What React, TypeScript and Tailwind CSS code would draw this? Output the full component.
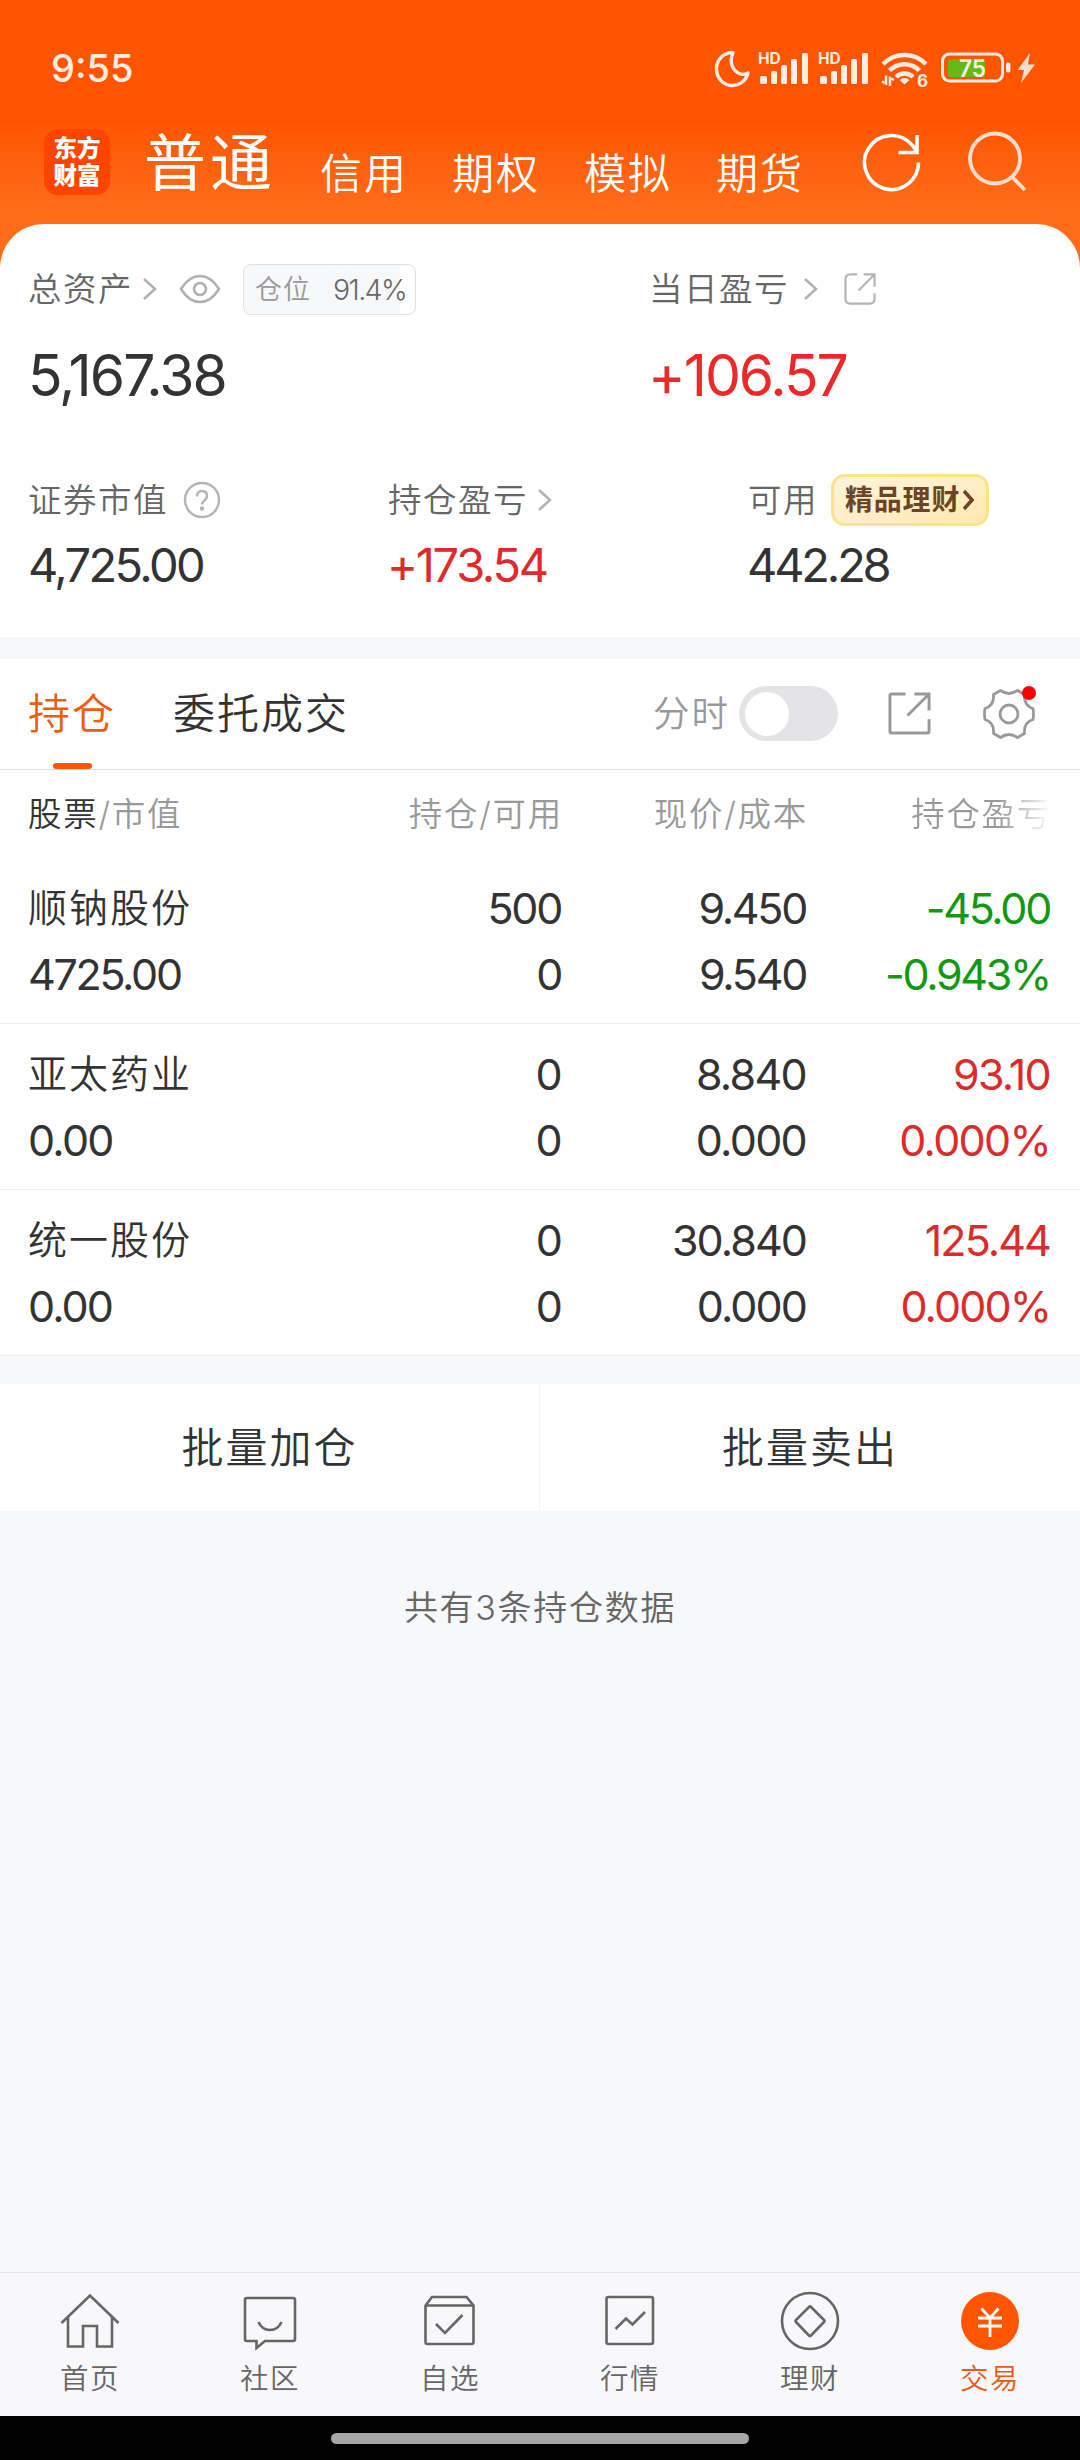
import type { ReactNode } from "react";

const navTabs = ["信用", "期权", "模拟", "期货"];

const holdings = [
  { name: "顺钠股份", value: "4725.00", qty: "500", avail: "0", price: "9.450", cost: "9.540", pl: "-45.00", pct: "-0.943%", color: "text-[#119911]", spacing: "tracking-[-2.3px]" },
  { name: "亚太药业", value: "0.00", qty: "0", avail: "0", price: "8.840", cost: "0.000", pl: "93.10", pct: "0.000%", color: "text-[#dd2b2b]", spacing: "tracking-[-1.7px]" },
  { name: "统一股份", value: "0.00", qty: "0", avail: "0", price: "30.840", cost: "0.000", pl: "125.44", pct: "0.000%", color: "text-[#dd2b2b]", spacing: "tracking-[-1.9px]" },
];

function Chevron({ className = "" }: { className?: string }) {
  return (
    <svg className={`h-6 w-4 shrink-0 ${className}`} viewBox="0 0 16 24" fill="none" stroke="#b0b0b0" strokeWidth="2.5">
      <path d="M2 2l11 10L2 22" />
    </svg>
  );
}

function Signal() {
  return (
    <svg className="-mt-1.5 h-[42px] w-[52px]" viewBox="0 -6 52 42" fill="#ffece2">
      <text x="0" y="13.500" fontSize="15.5" fontWeight="700" fontFamily="Inter, sans-serif">HD</text>
      <rect x="2" y="26" width="7" height="8" rx="1.5" />
      <rect x="13" y="21" width="6" height="13" rx="1.5" />
      <rect x="23" y="15" width="6" height="19" rx="1.5" />
      <rect x="33" y="9" width="6" height="25" rx="1.5" />
      <rect x="44" y="3" width="6" height="31" rx="1.5" />
    </svg>
  );
}

function StatusBar() {
  return (
    <div className="flex h-[120px] items-start pl-[51px] pr-[43px] pt-[50px] text-[#ffece2]">
      <span className="text-[38px] leading-9 font-medium">9:55</span>
      <div className="ml-auto flex items-start gap-2">
        <svg className="h-[38px] w-[36px]" viewBox="0 0 36 38" fill="none" stroke="#ffece2" strokeWidth="3.400" strokeLinejoin="round">
          <path d="M19 2.500A16 16.500 0 1 0 34 23C25 28 13 18 19 2.500Z" />
        </svg>
        <Signal />
        <Signal />
      </div>
      <div className="ml-[10px] flex items-start">
        <svg className="h-[46px] w-[52px]" viewBox="0 0 52 46" fill="none" stroke="#ffece2" strokeWidth="4.500">
          <path d="M3 14a30 30 0 0 1 43 0" />
          <path d="M9.500 20.500a21 21 0 0 1 30 0" />
          <path d="M16 27a12 12 0 0 1 17 0" />
          <path d="M19.500 30q5-4 10 0l-5 4.500z" fill="#ffece2" stroke="none" />
          <path d="M2 31.500l4 2v-8M10 36v-8l4 2" strokeWidth="2.500" />
          <text x="37" y="36.500" fontSize="17" fontWeight="700" fontFamily="Inter, sans-serif" fill="#ffece2" stroke="none">6</text>
        </svg>
        <svg className="-mt-px ml-[9px] h-9 w-[96px]" viewBox="0 0 96 36" fill="none">
          <rect x="1.500" y="5" width="60" height="27" rx="7" stroke="#ffece2" strokeWidth="3" />
          <rect x="7" y="10.500" width="37" height="17.500" rx="2" fill="#66b814" />
          <rect x="65" y="13.500" width="4.500" height="10" rx="2" fill="#ffece2" />
          <text x="18" y="28" fontSize="24" fontWeight="600" fontFamily="Inter, sans-serif" fill="#ffece2" textLength="27" lengthAdjust="spacingAndGlyphs">75</text>
          <path d="M89 4L76.500 21h6.500l-3 13 14-18.500h-7z" fill="#ffdccb" />
        </svg>
      </div>
    </div>
  );
}

function TopNav() {
  return (
    <div className="flex h-[104px] items-start pl-11 text-white">
      <div className="mt-[9px] grid h-[66px] w-[66px] place-content-center rounded-[14px] bg-[#ff4400] text-center text-[23.5px] leading-[27px] font-black">
        <span>东方</span>
        <span>财富</span>
      </div>
      <span className="mt-[13px] ml-[34px] text-[62px] leading-[62px] font-normal tracking-[4px]">普通</span>
      <div className="mt-8 ml-[44px] flex gap-11 text-[42px] leading-[44px] tracking-[2px]">
        {navTabs.map((t) => (
          <span key={t}>{t}</span>
        ))}
      </div>
      <svg className="mt-3 ml-[58px] h-[60px] w-[60px]" viewBox="0 0 60 60" fill="none" stroke="#fff" strokeWidth="3.600">
        <path d="M56.500 30.500A27 27 0 1 1 50 13L55 19.500" />
        <path d="M55 3v17.500H36.500" />
      </svg>
      <svg className="mt-[11px] ml-[45px] h-[62px] w-[62px]" viewBox="0 0 62 62" fill="none" stroke="#ffddcc" strokeWidth="3.800">
        <circle cx="28" cy="27.500" r="25" />
        <path d="M45 46l13 13" />
      </svg>
    </div>
  );
}

function ShareIcon({ className, stroke, r }: { className: string; stroke: string; r: number }) {
  return (
    <svg className={className} viewBox="0 0 44 44" fill="none" stroke={stroke} strokeWidth="3">
      <path d={`M18 2H${2 + r}Q2 2 2 ${2 + r}V${42 - r}Q2 42 ${2 + r} 42H${42 - r}Q42 42 42 ${42 - r}V28`} />
      <path d="M27 2h15v17M42 2L20 24" />
    </svg>
  );
}

function Label({ children }: { children: ReactNode }) {
  return <span className="text-[33.5px] leading-9 tracking-[1.5px] whitespace-nowrap text-[#666]">{children}</span>;
}

function Summary() {
  return (
    <section className="h-[413px] rounded-t-[44px] bg-white pl-[28px]">
      <div className="grid h-[190px] grid-cols-[621px_1fr] pt-[40px]">
        <div>
          <div className="flex h-[50px] items-center">
            <Label>总资产</Label>
            <Chevron className="ml-[9px]" />
            <svg className="ml-[21px] h-[30px] w-[42px]" viewBox="0 0 42 30" fill="none" stroke="#b0b0b0" strokeWidth="2.600">
              <path d="M2 15Q10 2 21 2t19 13Q32 28 21 28T2 15z" />
              <circle cx="21" cy="15" r="6" />
            </svg>
            <div className="mt-px ml-[22px] flex h-[51px] w-[173px] items-center rounded-lg border border-[#dfdfe2] bg-linear-to-r from-[#f7f8fa] from-91% to-white to-91% pl-[11px] leading-8">
              <span className="text-[27px] tracking-[1px] text-[#999]">仓位</span>
              <span className="ml-[22px] text-[28.5px] tracking-[-1.6px] text-[#666]">91.4%</span>
            </div>
          </div>
          <p className="mt-8 text-[57px] leading-[60px] font-normal tracking-[-2px] text-[#333]">5,167.38</p>
        </div>
        <div>
          <div className="flex h-[50px] items-center">
            <Label>当日盈亏</Label>
            <Chevron className="ml-[14px]" />
            <ShareIcon className="ml-[25px] h-8 w-8" stroke="#b5b5b5" r={7} />
          </div>
          <p className="mt-8 -ml-px text-[57px] leading-[60px] font-normal tracking-[-2px] text-[#ec2828]">+106.57</p>
        </div>
      </div>
      <div className="grid grid-cols-[360px_360px_1fr] pt-[60px]">
        <div>
          <div className="flex h-[52px] items-center">
            <Label>证券市值</Label>
            <svg className="ml-[15px] h-[38px] w-[38px]" viewBox="0 0 38 38" fill="none" stroke="#b5b5b5" strokeWidth="2.500">
              <circle cx="19" cy="19" r="17" />
              <path d="M14 15.500q0-5.500 5-5.500t5 5q0 2.500-2.500 4.500T19 23.500" />
              <circle cx="19" cy="27.500" r="1" />
            </svg>
          </div>
          <p className="mt-[14px] text-[47px] leading-[50px] font-normal tracking-[-2.6px] text-[#333]">4,725.00</p>
        </div>
        <div>
          <div className="flex h-[52px] items-center">
            <Label>持仓盈亏</Label>
            <Chevron className="ml-[9px]" />
          </div>
          <p className="mt-[14px] -ml-px text-[47px] leading-[50px] font-normal tracking-[-2.3px] text-[#dd2b2b]">+173.54</p>
        </div>
        <div>
          <div className="flex h-[52px] items-center">
            <Label>可用</Label>
            <div className="ml-[13px] flex h-[52px] w-[158px] items-center rounded-[14px] border-[3px] border-[#fbe38d] bg-linear-to-br from-[#fff3dc] to-[#ffe9b0] pl-[11px] text-[#6b4427]">
              <span className="text-[28px] leading-8 font-bold tracking-[0.8px]">精品理财</span>
              <svg className="ml-0.5 h-[22px] w-3 shrink-0" viewBox="0 0 12 22" fill="none" stroke="#6b4427" strokeWidth="3.500">
                <path d="M2 2l8 9-8 9" />
              </svg>
            </div>
          </div>
          <p className="mt-[14px] -ml-px text-[47px] leading-[50px] font-normal tracking-[-3.2px] text-[#333]">442.28</p>
        </div>
      </div>
    </section>
  );
}

function TabRow() {
  return (
    <div className="flex h-[111px] items-center border-b border-[#ddd] pl-[28px] text-[42px] leading-[44px] tracking-[2px] text-[#333]">
      <div className="relative flex h-full items-center text-[#ee5d11]">
        持仓
        <span className="absolute bottom-0 left-[25px] h-1.5 w-[39px] rounded-full bg-[#ff5500]" />
      </div>
      <span className="ml-[57px]">委托成交</span>
      <span className="ml-[304px] text-[36.500px] text-[#999]">分时</span>
      <div className="-mt-px ml-[9px] flex h-[55px] w-[99px] items-center rounded-full bg-[#e4e4e7] p-[6px]">
        <span className="h-11 w-11 rounded-full bg-white" />
      </div>
      <ShareIcon className="-mt-px ml-[50px] h-[43px] w-[43px]" stroke="#999" r={1.5} />
      <div className="relative -mt-px ml-[52px]">
        <svg className="h-[52px] w-[52px]" viewBox="0 0 52 52" fill="none" stroke="#999" strokeWidth="2.800" strokeLinejoin="round">
          <path d="M17.500 2.500Q26 8.500 34.500 2.500L41.500 6.500Q40.500 17.500 50 20.500Q51 26 50 31.500Q40.500 34.500 41.500 45.500L34.500 49.500Q26 43.500 17.500 49.500L10.500 45.500Q11.500 34.500 2 31.500Q1 26 2 20.500Q11.500 17.500 10.500 6.500Z" />
          <circle cx="26" cy="26" r="9" />
        </svg>
        <span className="absolute -top-0.5 left-[39px] h-[14px] w-[14px] rounded-full bg-[#ff0000]" />
      </div>
    </div>
  );
}

function Holdings() {
  return (
    <section className="bg-white">
      <div className="grid h-[88px] grid-cols-[271px_264px_245px_244px] items-center pl-[28px] text-right text-[33.5px] leading-9 tracking-[1.7px] text-[#999]">
        <span className="text-left">
          <span className="text-[#333]">股票</span>/市值
        </span>
        <span>持仓/可用</span>
        <span>现价/成本</span>
        <span className="bg-linear-to-r from-[#999] from-78% to-[#fff] to-100% bg-clip-text text-transparent">持仓盈亏</span>
      </div>
      {holdings.map((h) => (
        <div
          key={h.name}
          className={`grid h-[166px] grid-cols-[271px_262px_245px_244px] grid-rows-[66px_66px] items-center border-b border-[#ececee] pt-[17px] pl-[28px] text-right text-[43px] leading-[50px] font-normal text-[#333] ${h.spacing}`}
        >
          <span className="text-left text-[39px] font-[350] tracking-[2px]">{h.name}</span>
          <span>{h.qty}</span>
          <span>{h.price}</span>
          <span className={h.color}>{h.pl}</span>
          <span className="text-left">{h.value}</span>
          <span>{h.avail}</span>
          <span>{h.cost}</span>
          <span className={h.color}>{h.pct}</span>
        </div>
      ))}
    </section>
  );
}

const bottomTabs: { label: string; icon: ReactNode }[] = [
  {
    label: "首页",
    icon: <path d="M1.500 33L30 5.500 58.500 33M8 27.500V56.500H23V36H37V56.500H52V27.500" />,
  },
  {
    label: "社区",
    icon: (
      <>
        <path d="M7 8H53Q55 8 55 10V49Q55 51 53 51H25L16.500 58V51H7Q5 51 5 49V10Q5 8 7 8Z" />
        <path d="M18.500 32Q22 40 30 40T41.500 32" />
      </>
    ),
  },
  {
    label: "自选",
    icon: (
      <>
        <path d="M5.500 15.500L12 7H46.500L53.500 15.500V52Q53.500 54 51.500 54H7.500Q5.500 54 5.500 52ZM5.500 15.500H53.500" />
        <path d="M16 34l9 9 17.500-18" />
      </>
    ),
  },
  {
    label: "行情",
    icon: (
      <>
        <rect x="6.500" y="7" width="46.500" height="47" rx="2" />
        <path d="M15.500 39L26 28.500l6.500 6L45 22" />
      </>
    ),
  },
  {
    label: "理财",
    icon: (
      <>
        <circle cx="30" cy="31" r="28" />
        <path d="M29 17Q30 16 31 17L44 30Q45 31 44 32L31 45.500Q30 46.500 29 45.500L16 32Q15 31 16 30Z" />
      </>
    ),
  },
];

function BottomNav() {
  return (
    <nav className="grid h-[144px] grid-cols-6 border-t border-[#e3e3e6] bg-[#f8f8fb] pt-[17px] text-[28.5px] leading-8 tracking-[1.5px] text-[#666]">
      {bottomTabs.map((t) => (
        <div key={t.label} className="flex flex-col items-center">
          <svg className="h-[62px] w-[60px]" viewBox="0 0 60 62" fill="none" stroke="#666" strokeWidth="2.600">
            {t.icon}
          </svg>
          <span className="mt-[11px]">{t.label}</span>
        </div>
      ))}
      <div className="flex flex-col items-center text-[#e65c17]">
        <svg className="h-[62px] w-[60px]" viewBox="0 0 60 62" fill="none" stroke="#fff" strokeWidth="2.800">
          <circle cx="30" cy="31" r="29" fill="#ff5500" stroke="none" />
          <path d="M21.500 18.500L30 28l8.500-9.500M30 28v19M18 28h24M18 36h24" />
        </svg>
        <span className="mt-[11px]">交易</span>
      </div>
    </nav>
  );
}

export default function App() {
  return (
    <div className="flex h-[2460px] w-[1080px] flex-col bg-[#f7f8fa] font-['Inter','Noto_Sans_CJK_SC',sans-serif] font-[350]">
      <header className="-mb-11 h-[268px] bg-linear-to-b from-[#ff5500] from-45% to-[#ff6d1a] to-80%">
        <StatusBar />
        <TopNav />
      </header>
      <Summary />
      <div className="mt-[22px] bg-white">
        <TabRow />
        <Holdings />
      </div>
      <div className="mt-[28px] grid h-[127px] grid-cols-2 bg-white text-center text-[42px] leading-[128px] tracking-[2px] text-[#333]">
        <span className="border-r border-[#f5f5f7]">批量加仓</span>
        <span>批量卖出</span>
      </div>
      <p className="mt-[77px] text-center text-[34px] leading-10 tracking-[1.7px] text-[#666]">共有3条持仓数据</p>
      <div className="mt-auto">
        <BottomNav />
        <div className="flex h-11 justify-center bg-black pt-[17px]">
          <span className="h-[11px] w-[418px] rounded-full bg-[#a6a6a6]" />
        </div>
      </div>
    </div>
  );
}
